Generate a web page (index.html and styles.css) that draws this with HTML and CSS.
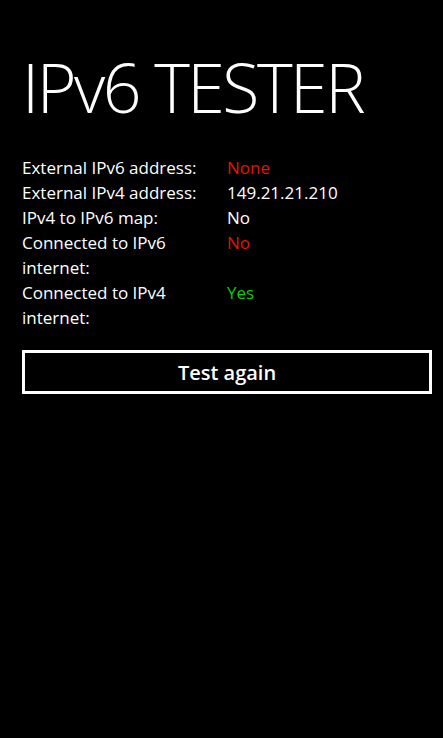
FILE: index.html
```html
<!DOCTYPE html>
<html lang="en">
<head>
  <meta charset="UTF-8">
  <meta name="viewport" content="width=device-width, initial-scale=1.0">
  <title>IPv6 Tester</title>
  <link rel="stylesheet" href="styles.css">
</head>
<body>
  <div class="page">
    <h1 class="title">IPv6 TESTER</h1>

    <div class="results">
      <div class="label">External IPv6 address:</div>
      <div class="value bad">None</div>

      <div class="label">External IPv4 address:</div>
      <div class="value">149.21.21.210</div>

      <div class="label">IPv4 to IPv6 map:</div>
      <div class="value">No</div>

      <div class="label">Connected to IPv6 internet:</div>
      <div class="value bad">No</div>

      <div class="label">Connected to IPv4 internet:</div>
      <div class="value good">Yes</div>
    </div>

    <button class="test-button">Test again</button>
  </div>
</body>
</html>
```

FILE: styles.css
```css
html, body {
  margin: 0;
  background: #000;
}

body {
  font-family: "Open Sans", "Noto Sans", sans-serif;
  color: #fff;
}

.page {
  padding: 42px 11px 20px 22px;
}

.title {
  font-weight: 300;
  font-size: 68px;
  line-height: 90px;
  margin: 0 0 23px 0;
  letter-spacing: -2.5px;
}

.results {
  display: grid;
  grid-template-columns: 205px 1fr;
  font-size: 17px;
  line-height: 25px;
}

.label {
  width: 190px;
}

.value.bad {
  color: #e51400;
}

.value.good {
  color: #00d000;
}

.test-button {
  display: block;
  width: 100%;
  margin-top: 20px;
  height: 44px;
  background: #000;
  color: #fff;
  border: 3px solid #fff;
  font-family: "Open Sans", "Noto Sans", sans-serif;
  font-weight: 600;
  font-size: 20px;
  padding: 0;
}
```
